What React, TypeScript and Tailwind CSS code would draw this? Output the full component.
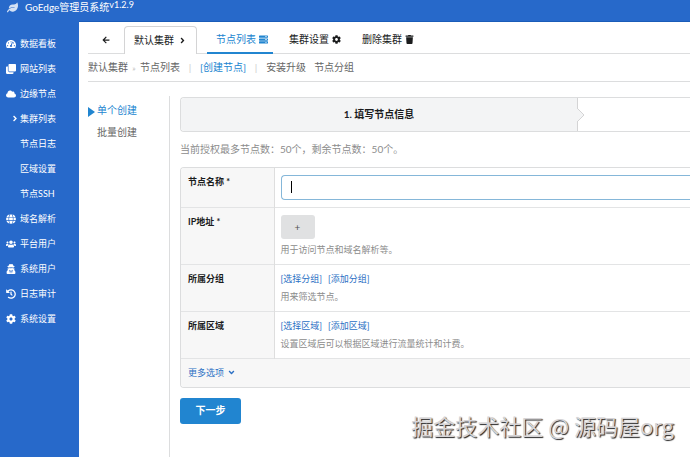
import React, { useState } from 'react';
import {
    FaAngleDown, FaAngleRight, FaArrowLeft, FaClone, FaCloud, FaCog, FaGlobe, FaHistory,
    FaLeaf, FaServer, FaTachometerAlt, FaTrash, FaUserSecret, FaUsers
} from 'react-icons/fa';

const MENU = [
    { name: '数据看板', icon: FaTachometerAlt },
    { name: '网站列表', icon: FaClone },
    { name: '边缘节点', icon: FaCloud },
    { name: '集群列表', icon: FaAngleRight, sub: true },
    { name: '节点日志' },
    { name: '区域设置' },
    { name: '节点SSH' },
    { name: '域名解析', icon: FaGlobe },
    { name: '平台用户', icon: FaUsers },
    { name: '系统用户', icon: FaUserSecret },
    { name: '日志审计', icon: FaHistory },
    { name: '系统设置', icon: FaCog },
];

const Sidebar = () => (
    <nav className="w-[79px] shrink-0 bg-[#2769ca] pt-[10px] text-[9px] text-white">
        {MENU.map(({ name, icon: Icon, sub }) => (
            <a key={name} href="#" className="flex h-[25px] items-center">
                <span className={`flex w-5 shrink-0 items-center ${sub ? 'justify-end pr-[2px]' : 'pl-[6px]'}`}>
                    {Icon && <Icon className={sub ? 'h-[9px] w-[6px]' : 'h-[10px] w-[10px]'} />}
                </span>
                <span className="whitespace-nowrap">{name}</span>
            </a>
        ))}
    </nav>
);

const TabMenu = () => (
    <nav className="flex h-[28px] items-stretch whitespace-nowrap border-b border-[#dcddde] text-[10px] text-[#1b1c1d]">
        <a href="#" aria-label="返回" className="flex w-[36px] items-center justify-center">
            <FaArrowLeft className="h-2 w-2" />
        </a>
        <a href="#" className="-mb-px flex items-center gap-1 rounded-t border border-b-0 border-[#d4d4d5] bg-white px-[9px]">
            默认集群 <FaAngleRight className="h-[9px] w-[9px]" />
        </a>
        <a href="#" className="-mb-px ml-[10px] flex items-center gap-[3px] border-b-2 border-[#2185d0] pl-[9px] pr-[5px] text-[#2185d0]">
            节点列表 <FaServer className="h-[9px] w-[9px]" />
        </a>
        <a href="#" className="ml-4 flex items-center gap-[3px]">
            集群设置 <FaCog className="h-[9px] w-[9px]" />
        </a>
        <a href="#" className="ml-[21px] flex items-center gap-[3px]">
            删除集群 <FaTrash className="h-[9px] w-[9px]" />
        </a>
    </nav>
);

const SubMenu = () => (
    <nav className="flex h-[28px] items-center whitespace-nowrap border-b border-[#dcddde] text-[10px] text-[#666]">
        <a href="#">默认集群</a>
        <span className="w-3 text-center text-[8px] text-[#bbb]">»</span>
        <a href="#">节点列表</a>
        <span className="mx-[7px] w-[6px] text-center text-[#ccc]">|</span>
        <a href="#" className="text-[#2185d0]">[创建节点]</a>
        <span className="mx-[7px] w-[6px] text-center text-[#ccc]">|</span>
        <a href="#">安装升级</a>
        <a href="#" className="ml-2">节点分组</a>
    </nav>
);

const Row = ({ label, htmlFor, required, children }: {
    label: string;
    htmlFor?: string;
    required?: boolean;
    children: React.ReactNode;
}) => (
    <tr className="border-b border-[#e3e4e5]">
        <th scope="row" className="w-[93px] border-r border-[#dedede] bg-[#f7f7f7] px-[7px] py-[7px] text-left align-top font-bold leading-[14px] text-[#1b1c1d]">
            <label htmlFor={htmlFor}>{label}{required && <span> *</span>}</label>
        </th>
        <td className="py-[7px] pl-[6px] align-top">{children}</td>
    </tr>
);

const Hint = ({ children }: { children: React.ReactNode }) => (
    <p className="mt-1 leading-[14px] text-[#8c8c8c]">{children}</p>
);

const NodeForm = () => {
    const [name, setName] = useState('');

    return (
        <form className="min-w-0 flex-1 pl-[10px]" onSubmit={e => e.preventDefault()}>
            {/* Steps */}
            <ol className="mt-px flex h-[35px] rounded-l border border-r-0 border-[#dcddde] text-[10px]">
                <li className="relative flex w-[78%] items-center justify-center rounded-l border-r border-[#d4d4d5] bg-[#f3f4f5] font-bold text-[#1b1c1d]">
                    1. 填写节点信息
                    <svg className="absolute -right-2 top-[9px]" width="8" height="16" viewBox="0 0 8 16" aria-hidden="true">
                        <path d="M0 1L7 8L0 15" fill="#f3f4f5" stroke="#d4d4d5" />
                    </svg>
                </li>
                <li className="flex-1"></li>
            </ol>

            <p className="pb-[10px] pt-[9px] text-[10px] leading-4 text-[#8c8c8c]">当前授权最多节点数：50个，剩余节点数：50个。</p>

            <div className="overflow-hidden rounded-l border border-r-0 border-[#dcddde]">
                <table className="w-full border-collapse text-[9px]">
                    <tbody>
                        <Row label="节点名称" htmlFor="node-name" required>
                            <div className="relative">
                                <input
                                    id="node-name"
                                    type="text"
                                    value={name}
                                    onChange={e => setName(e.target.value)}
                                    className="block h-[25px] w-full rounded-l border border-r-0 border-[#85b7d9] px-[9px] text-[10px] outline-none"
                                />
                                {!name && <span className="pointer-events-none absolute left-[10px] top-[6px] h-3 w-px bg-black"></span>}
                            </div>
                        </Row>
                        <Row label="IP地址" htmlFor="add-ip" required>
                            <button id="add-ip" type="button" className="block h-6 w-[34px] rounded-[3px] bg-[#e0e1e2] text-[10px] text-[#555]">+</button>
                            <Hint>用于访问节点和域名解析等。</Hint>
                        </Row>
                        <Row label="所属分组">
                            <div className="flex gap-[6px] leading-[14px] text-[#2b70c4]">
                                <a href="#">[选择分组]</a>
                                <a href="#">[添加分组]</a>
                            </div>
                            <Hint>用来筛选节点。</Hint>
                        </Row>
                        <Row label="所属区域">
                            <div className="flex gap-[6px] leading-[14px] text-[#2b70c4]">
                                <a href="#">[选择区域]</a>
                                <a href="#">[添加区域]</a>
                            </div>
                            <Hint>设置区域后可以根据区域进行流量统计和计费。</Hint>
                        </Row>
                        <tr className="bg-[#f7f7f7]">
                            <td colSpan={2} className="h-[28px] px-[7px]">
                                <a href="#" className="flex items-center gap-[3px] text-[#2b70c4]">
                                    更多选项 <FaAngleDown className="h-[9px] w-[9px]" />
                                </a>
                            </td>
                        </tr>
                    </tbody>
                </table>
            </div>

            <button type="submit" className="mt-[10px] h-[26px] w-[61px] rounded-[3px] bg-[#2185d0] text-[10px] font-bold text-white">下一步</button>
        </form>
    );
};

export default function App() {
    return (
        <div className="relative flex min-h-screen flex-col overflow-hidden bg-white font-[Lato,'Noto_Sans_CJK_SC',sans-serif]">
            <header className="flex h-[21px] shrink-0 items-start bg-[#2769ca] pl-[7px] text-white">
                <FaLeaf className="mt-[2px] h-[11px] w-[11px] opacity-80" />
                <span className="ml-[7px] text-[10px] leading-[15px]">GoEdge管理员系统</span>
                <span className="text-[9px] leading-[9px]">v1.2.9</span>
            </header>

            <div className="flex flex-1">
                <Sidebar />
                <main className="flex min-w-0 flex-1 flex-col border-t border-[#1a5cb8] pl-[9px] pt-1">
                    <TabMenu />
                    <SubMenu />
                    <div className="flex flex-1 pt-[14px]">
                        <nav className="w-[82px] shrink-0 border-r border-[#dcddde] pt-[3px] text-[10px] leading-[22px] text-[#666]">
                            <a href="#" className="flex items-center text-[#2185d0]">
                                <span className="mr-[2px] mt-1 border-y-[5px] border-l-[7px] border-y-transparent border-l-[#2185d0]"></span>
                                单个创建
                            </a>
                            <a href="#" className="block pl-[9px]">批量创建</a>
                        </nav>
                        <NodeForm />
                    </div>
                </main>
            </div>

            {/* Watermark */}
            <div className="pointer-events-none absolute bottom-4 right-4 whitespace-nowrap font-['Noto_Sans_CJK_SC',sans-serif] text-[22px] leading-8 text-[#d6d4d6] [text-shadow:1px_1px_1px_#222]">
                掘金技术社区 @ 源码屋org
            </div>
        </div>
    );
}
